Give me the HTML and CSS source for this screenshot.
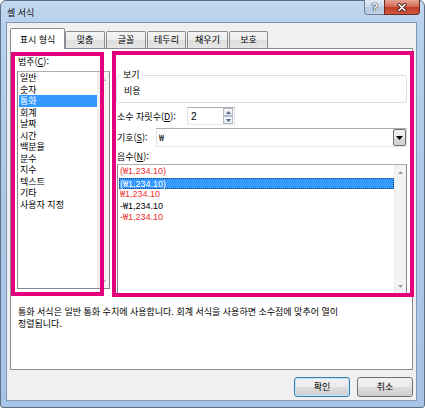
FILE: index.html
```html
<!DOCTYPE html>
<html lang="ko">
<head>
<meta charset="utf-8">
<title>셀 서식</title>
<link rel="stylesheet" href="styles.css">
</head>
<body>
<div class="window">
  <div class="titlebar">
    <span class="title">셀 서식</span>
    <div class="caption">
      <div class="cap-help">?</div>
      <div class="cap-close">
        <svg width="12" height="9" viewBox="0 0 12 9"><path d="M3 1.5 L9 7.5 M9 1.5 L3 7.5" stroke="#4a1e16" stroke-width="3.4" stroke-linecap="round"/><path d="M3 1.5 L9 7.5 M9 1.5 L3 7.5" stroke="#ffffff" stroke-width="1.7" stroke-linecap="round"/></svg>
      </div>
    </div>
  </div>
  <div class="client">
    <div class="tabs">
      <div class="tab selected">표시 형식</div>
      <div class="tab t-align">맞춤</div>
      <div class="tab t-font">글꼴</div>
      <div class="tab t-border">테두리</div>
      <div class="tab t-fill">채우기</div>
      <div class="tab t-protect">보호</div>
    </div>
    <div class="panel">
      <div class="cols">
        <div class="left-col">
          <div class="cat-label">범주(<u>C</u>):</div>
          <div class="listbox cat-list">
            <div class="items">
              <div class="item">일반</div>
              <div class="item">숫자</div>
              <div class="item sel">통화</div>
              <div class="item">회계</div>
              <div class="item">날짜</div>
              <div class="item">시간</div>
              <div class="item">백분율</div>
              <div class="item">분수</div>
              <div class="item">지수</div>
              <div class="item">텍스트</div>
              <div class="item">기타</div>
              <div class="item">사용자 지정</div>
            </div>
            <div class="vscroll">
              <svg class="arr" width="5" height="3" viewBox="0 0 5 3"><path d="M0 3 L2.5 0 L5 3 Z" fill="#b0b0b0"/></svg>
              <svg class="arr" width="5" height="3" viewBox="0 0 5 3"><path d="M0 0 L2.5 3 L5 0 Z" fill="#b0b0b0"/></svg>
            </div>
          </div>
        </div>
        <div class="right-col">
          <div class="group">
            <span class="legend">보기</span>
            <div class="sample">비용</div>
          </div>
          <div class="row row-dec">
            <span class="lbl lbl-dec">소수 자릿수(<u>D</u>):</span>
            <div class="spinner">
              <span class="spin-val">2</span>
              <div class="spin-btns">
                <div class="spin-btn"><svg width="5" height="3" viewBox="0 0 5 3"><path d="M0 3 L2.5 0 L5 3 Z" fill="#4d6185"/></svg></div>
                <div class="spin-btn"><svg width="5" height="3" viewBox="0 0 5 3"><path d="M0 0 L2.5 3 L5 0 Z" fill="#4d6185"/></svg></div>
              </div>
            </div>
          </div>
          <div class="row row-sym">
            <span class="lbl lbl-sym">기호(<u>S</u>):</span>
            <div class="combo">
              <span class="combo-val"><span class="won">₩</span></span>
              <div class="combo-btn"><svg width="7" height="4" viewBox="0 0 7 4"><path d="M0 0 L7 0 L3.5 4 Z" fill="#000"/></svg></div>
            </div>
          </div>
          <div class="neg-label">음수(<u>N</u>):</div>
          <div class="listbox neg-list">
            <div class="items">
              <div class="item red">(<span class="won">₩</span>1,234.10)</div>
              <div class="item sel focus">(<span class="won">₩</span>1,234.10)</div>
              <div class="item red"><span class="won">₩</span>1,234.10</div>
              <div class="item">-<span class="won">₩</span>1,234.10</div>
              <div class="item red">-<span class="won">₩</span>1,234.10</div>
            </div>
            <div class="vscroll">
              <svg class="arr" width="5" height="3" viewBox="0 0 5 3"><path d="M0 3 L2.5 0 L5 3 Z" fill="#a0a0a0"/></svg>
              <svg class="arr" width="5" height="3" viewBox="0 0 5 3"><path d="M0 0 L2.5 3 L5 0 Z" fill="#a0a0a0"/></svg>
            </div>
          </div>
        </div>
      </div>
      <div class="desc">통화 서식은 일반 통화 수치에 사용합니다. 회계 서식을 사용하면 소수점에 맞추어 열이<br>정렬됩니다.</div>
      <div class="hl hl-left"></div>
      <div class="hl hl-right"></div>
    </div>
    <div class="buttons">
      <div class="btn default">확인</div>
      <div class="btn">취소</div>
    </div>
  </div>
</div>
</body>
</html>
```

FILE: styles.css
```css
html, body {
  margin: 0;
  padding: 0;
}
body {
  width: 425px;
  height: 409px;
  background: #ffffff;
  font-family: "Noto Sans CJK KR", "Noto Sans", sans-serif;
  font-size: 9px;
  color: #000;
  overflow: hidden;
}
u { text-decoration: underline; text-underline-offset: 1px; }

.window {
  width: 425px;
  height: 408px;
  box-sizing: border-box;
  border: 1px solid #5f6f86;
  border-radius: 6px 6px 3px 3px;
  background: linear-gradient(to bottom, #c3d9f1 0px, #b8d1ed 22px, #abc8e9 200px, #a7c4e6 408px);
  display: flex;
  flex-direction: column;
}

.titlebar {
  height: 21px;
  display: flex;
  align-items: flex-start;
}
.title {
  padding-left: 6px;
  line-height: 21px;
  padding-top: 1px;
  color: #101010;
}
.caption {
  margin-left: auto;
  margin-right: 4px;
  margin-top: -1px;
  display: flex;
}
.cap-help {
  width: 20px;
  height: 15px;
  box-sizing: border-box;
  border: 1px solid #6f7f96;
  border-right: none;
  border-top: none;
  border-radius: 0 0 0 4px;
  background: linear-gradient(to bottom, #e4ecf6 0%, #cbd9ea 50%, #b5c8df 51%, #c4d4e7 100%);
  font-family: "Liberation Sans", sans-serif;
  font-weight: bold;
  font-size: 11px;
  line-height: 14px;
  text-align: center;
  color: #ffffff;
  text-shadow: 0 0 1px #2b3a50, 0 0 1px #2b3a50, 0 0 1px #2b3a50;
}
.cap-close {
  width: 36px;
  height: 15px;
  box-sizing: border-box;
  border: 1px solid #6b2a20;
  border-top: none;
  border-radius: 0 0 4px 0;
  background: linear-gradient(to bottom, #e7a595 0%, #d56d5a 45%, #c33d28 52%, #d0583f 100%);
  display: flex;
  align-items: center;
  justify-content: center;
}

.client {
  margin: 0 7px 6px 5px;
  height: 379px;
  box-sizing: border-box;
  border: 1px solid #8497b1;
  background: #f0f0f0;
  padding: 5px 3px 0 3px;
  display: flex;
  flex-direction: column;
}

.tabs {
  height: 20px;
  display: flex;
  align-items: flex-end;
  position: relative;
  z-index: 2;
}
.tab {
  height: 17px;
  box-sizing: border-box;
  border: 1px solid #898c95;
  border-bottom: none;
  border-radius: 2px 2px 0 0;
  background: linear-gradient(to bottom, #f4f4f4 0%, #ececec 50%, #dedede 51%, #e6e6e6 100%);
  text-align: center;
  line-height: 16px;
  margin-left: 1px;
}
.tab.selected {
  height: 21px;
  margin-bottom: -1px;
  width: 55px;
  margin-left: 0;
  background: #ffffff;
  line-height: 22px;
}
.tab.t-align { width: 40px; margin-left: 0; }
.tab.t-font { width: 40px; }
.tab.t-border { width: 39px; }
.tab.t-fill { width: 41px; }
.tab.t-protect { width: 39px; }

.panel {
  position: relative;
  height: 322px;
  box-sizing: border-box;
  border: 1px solid #898c95;
  background: #ffffff;
  padding: 7px 0 0 6px;
}
.cols {
  display: flex;
  gap: 6px;
}
.left-col {
  width: 93px;
}
.cat-label {
  line-height: 12px;
  padding-left: 1px;
  padding-bottom: 3px;
}
.listbox {
  box-sizing: border-box;
  border: 1px solid #828790;
  border-top-color: #abadb3;
  background: #fff;
  display: flex;
}
.cat-list {
  height: 218px;
}
.items {
  flex: 1;
  min-width: 0;
}
.item {
  line-height: 11.5px;
  height: 11.5px;
  padding-left: 1px;
  margin-left: 1px;
  white-space: nowrap;
}
.item.sel {
  background: #3399ff;
  color: #ffffff;
}
.neg-list .item {
  font-family: "Liberation Sans", "Noto Sans CJK KR", sans-serif;
  font-size: 9px;
}
.won {
  font-family: "Noto Sans CJK KR", sans-serif;
  font-size: 9px;
  line-height: 1;
}
.item.red { color: #f03030; }
.item.focus {
  box-sizing: border-box;
  border: 1px dotted #1c3a66;
  line-height: 9.5px;
  padding-left: 0;
}
.vscroll {
  width: 12px;
  background: #f3f3f3;
  border-left: 1px solid #ececec;
  display: flex;
  flex-direction: column;
  justify-content: space-between;
  align-items: center;
  padding: 6px 0 5px;
  box-sizing: border-box;
}
.arr { display: block; }

.right-col {
  width: 291px;
  padding-top: 19px;
}
.group {
  position: relative;
  height: 28px;
  box-sizing: border-box;
  border: 1px solid #d5dfe5;
  border-radius: 3px;
  padding: 9px 0 0 7px;
}
.legend {
  position: absolute;
  left: 4px;
  top: -7px;
  padding: 0 2px;
  background: #ffffff;
  line-height: 12px;
}
.sample {
  line-height: 12px;
}
.row {
  display: flex;
  align-items: center;
  padding-left: 1px;
}
.row-dec { margin-top: 4px; }
.row-sym { margin-top: 3px; }
.lbl-dec { width: 70px; }
.lbl-sym { width: 39px; }
.spinner {
  width: 48px;
  height: 18px;
  box-sizing: border-box;
  border: 1px solid #abadb3;
  border-left-color: #e2e3ea;
  border-bottom-color: #e3e9ef;
  border-right-color: #dbdfe6;
  display: flex;
  align-items: center;
}
.spin-val {
  flex: 1;
  padding-left: 3px;
  font-family: "Liberation Sans", sans-serif;
  font-size: 10px;
}
.spin-btns {
  width: 10px;
  height: 16px;
  margin-right: 1px;
  display: flex;
  flex-direction: column;
}
.spin-btn {
  flex: 1;
  box-sizing: border-box;
  border: 1px solid #b5bcc7;
  background: linear-gradient(to bottom, #f7f8fa, #e4e8ee);
  display: flex;
  align-items: center;
  justify-content: center;
}
.combo {
  width: 251px;
  height: 19px;
  box-sizing: border-box;
  border: 1px solid #abadb3;
  border-left-color: #e2e3ea;
  border-bottom-color: #e3e9ef;
  border-right-color: #dbdfe6;
  display: flex;
  align-items: center;
}
.combo-val {
  flex: 1;
  padding-left: 2px;
  line-height: 12px;
}
.combo-btn {
  width: 13px;
  height: 17px;
  box-sizing: border-box;
  border: 1px solid #707070;
  border-radius: 2px;
  background: linear-gradient(to bottom, #f2f2f2 0%, #ebebeb 50%, #dddddd 51%, #cfcfcf 100%);
  display: flex;
  align-items: center;
  justify-content: center;
}
.neg-label {
  margin-top: 4px;
  line-height: 12px;
  padding-left: 1px;
}
.neg-list {
  margin-top: 1px;
  margin-left: 1px;
  height: 130px;
  padding-top: 1px;
}
.neg-list .vscroll {
  margin-top: -1px;
}

.desc {
  margin-top: 12px;
  padding-left: 1px;
  line-height: 11.5px;
}

.hl {
  position: absolute;
  box-sizing: border-box;
  border: 4px solid #e4007c;
  pointer-events: none;
}
.hl-left {
  left: 0;
  top: 3px;
  width: 93px;
  height: 244px;
}
.hl-right {
  left: 101px;
  top: 2px;
  width: 302px;
  height: 246px;
}

.buttons {
  margin-top: 7px;
  display: flex;
  justify-content: flex-end;
  gap: 7px;
}
.btn {
  width: 56px;
  height: 20px;
  box-sizing: border-box;
  border: 1px solid #707070;
  border-radius: 3px;
  background: linear-gradient(to bottom, #f2f2f2 0%, #ebebeb 50%, #dddddd 51%, #cfcfcf 100%);
  text-align: center;
  line-height: 18px;
}
.btn.default {
  border-color: #3c7fb1;
  box-shadow: inset 0 0 0 1px #bfe3f8;
}
```
